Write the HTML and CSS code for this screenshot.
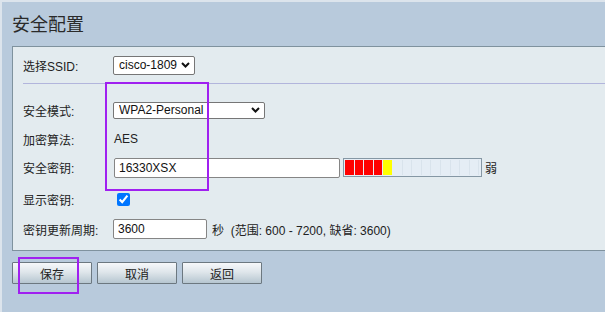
FILE: index.html
```html
<!DOCTYPE html>
<html lang="zh-CN">
<head>
    <meta charset="UTF-8">
    <title>安全配置</title>
    <link rel="stylesheet" href="styles.css">
</head>
<body>
    <h1 class="title">安全配置</h1>

    <div class="panel">
        <div class="row row-ssid">
            <label class="label">选择SSID:</label>
            <span class="select-wrap">
                <select class="select select-ssid">
                    <option>cisco-1809</option>
                </select>
                <svg class="chev" width="9" height="6" viewBox="0 0 9 6"><path d="M1 1l3.5 3.5L8 1" fill="none" stroke="#111" stroke-width="2"/></svg>
            </span>
        </div>
        <div class="sep"></div>
        <div class="row row-mode">
            <label class="label">安全模式:</label>
            <span class="select-wrap">
                <select class="select select-mode">
                    <option>WPA2-Personal</option>
                </select>
                <svg class="chev" width="9" height="6" viewBox="0 0 9 6"><path d="M1 1l3.5 3.5L8 1" fill="none" stroke="#111" stroke-width="2"/></svg>
            </span>
        </div>
        <div class="row row-alg">
            <span class="label">加密算法:</span>
            <span class="value">AES</span>
        </div>
        <div class="row row-key">
            <label class="label">安全密钥:</label>
            <input class="text key-input" type="text" value="16330XSX">
            <div class="meter">
                <span class="cell red"></span><span class="cell red"></span><span class="cell red"></span><span class="cell red"></span><span class="cell yellow"></span><span class="cell"></span><span class="cell"></span><span class="cell"></span><span class="cell"></span><span class="cell"></span><span class="cell"></span><span class="cell"></span><span class="cell"></span><span class="cell"></span>
            </div>
            <span class="strength">弱</span>
        </div>
        <div class="row row-show">
            <label class="label">显示密钥:</label>
            <input class="check" type="checkbox" checked>
        </div>
        <div class="row row-period">
            <label class="label">密钥更新周期:</label>
            <input class="text period-input" type="text" value="3600">
            <span class="unit">秒&nbsp; (范围: 600 - 7200, 缺省: 3600)</span>
        </div>
    </div>

    <div class="buttons">
        <button class="btn">保存</button>
        <button class="btn">取消</button>
        <button class="btn">返回</button>
    </div>

    <div class="mark mark-fields"></div>
    <div class="mark mark-save"></div>
</body>
</html>
```
FILE: styles.css
```css
html, body {
    margin: 0;
    padding: 0;
}

body {
    font-family: "Liberation Sans", "Noto Sans CJK SC", sans-serif;
    font-size: 12px;
    color: #222;
    background-color: #b8cadc;
    min-height: 100vh;
    box-shadow: inset 2px 2px 0 #dce4ec;
    overflow: hidden;
    position: relative;
}

.title {
    font-family: "Noto Sans CJK SC", sans-serif;
    font-size: 18px;
    font-weight: normal;
    color: #2a2a2a;
    margin: 0;
    padding: 12px 0 0 12px;
    height: 34px;
    line-height: 22px;
}

.panel {
    margin-left: 12px;
    background-color: #e3ebef;
    border: 1px solid #7f929e;
    border-right: none;
    padding: 0 0 9px 10px;
}

.row {
    display: flex;
    align-items: center;
}

.label {
    width: 90px;
    flex-shrink: 0;
}

.row-ssid { height: 36px; }
.row-mode { height: 28px; margin-top: 12px; }
.row-alg { height: 30px; }
.row-key { height: 27px; }
.row-show { height: 36px; }
.row-period { height: 24px; }

.sep {
    height: 1px;
    background-color: #b2b5dc;
}

.select-wrap {
    position: relative;
    display: inline-flex;
}

.select {
    appearance: none;
    -webkit-appearance: none;
    font-family: "Liberation Sans", sans-serif;
    font-size: 12px;
    color: #111;
    background-color: #fff;
    border: 1px solid #767676;
    border-radius: 2px;
    padding: 0 0 0 5px;
    margin: 0;
    box-sizing: border-box;
}

.chev {
    position: absolute;
    right: 5px;
    top: 50%;
    margin-top: -3px;
    pointer-events: none;
}

.select-ssid {
    width: 82px;
    height: 19px;
}

.select-mode {
    width: 152px;
    height: 17px;
}

.value {
    padding-left: 1px;
}

.text {
    font-family: "Liberation Sans", sans-serif;
    font-size: 12px;
    color: #111;
    box-sizing: border-box;
    height: 20px;
    border: 1px solid #858585;
    border-radius: 2px;
    padding: 0 4px;
    margin: 0;
    background: #fff;
}

.key-input {
    width: 226px;
    margin-left: 1px;
}

.meter {
    display: flex;
    gap: 1px;
    box-sizing: border-box;
    width: 139px;
    height: 19px;
    margin-left: 3px;
    padding: 1px;
    border: 1px solid #8597a4;
    background-color: #e5edf5;
}

.cell {
    width: 8.6px;
    height: 100%;
    background-color: #e5edf5;
    box-shadow: 1px 0 0 #d9e3ec;
}

.cell.red { background-color: #ff0000; box-shadow: none; }
.cell.yellow { background-color: #ffff00; box-shadow: none; }

.strength {
    margin-left: 3px;
}

.check {
    width: 13px;
    height: 13px;
    margin: 0 0 0 4px;
}

.period-input {
    width: 94px;
}

.unit {
    margin-left: 5px;
}

.buttons {
    display: flex;
    gap: 5px;
    margin: 11px 0 0 12px;
}

.btn {
    font-family: "Noto Sans CJK SC", sans-serif;
    font-size: 12px;
    color: #222;
    width: 80px;
    height: 22px;
    padding: 0;
    border: 1px solid #6c7880;
    border-radius: 1px;
    background: linear-gradient(#f6f8fa, #dfe6eb 45%, #b6c6d0);
    cursor: pointer;
}

.mark {
    position: absolute;
    border: 2px solid #a020f0;
    box-sizing: border-box;
}

.mark-fields {
    left: 105px;
    top: 82px;
    width: 104px;
    height: 109px;
}

.mark-save {
    left: 18px;
    top: 257px;
    width: 61px;
    height: 37px;
}
```
